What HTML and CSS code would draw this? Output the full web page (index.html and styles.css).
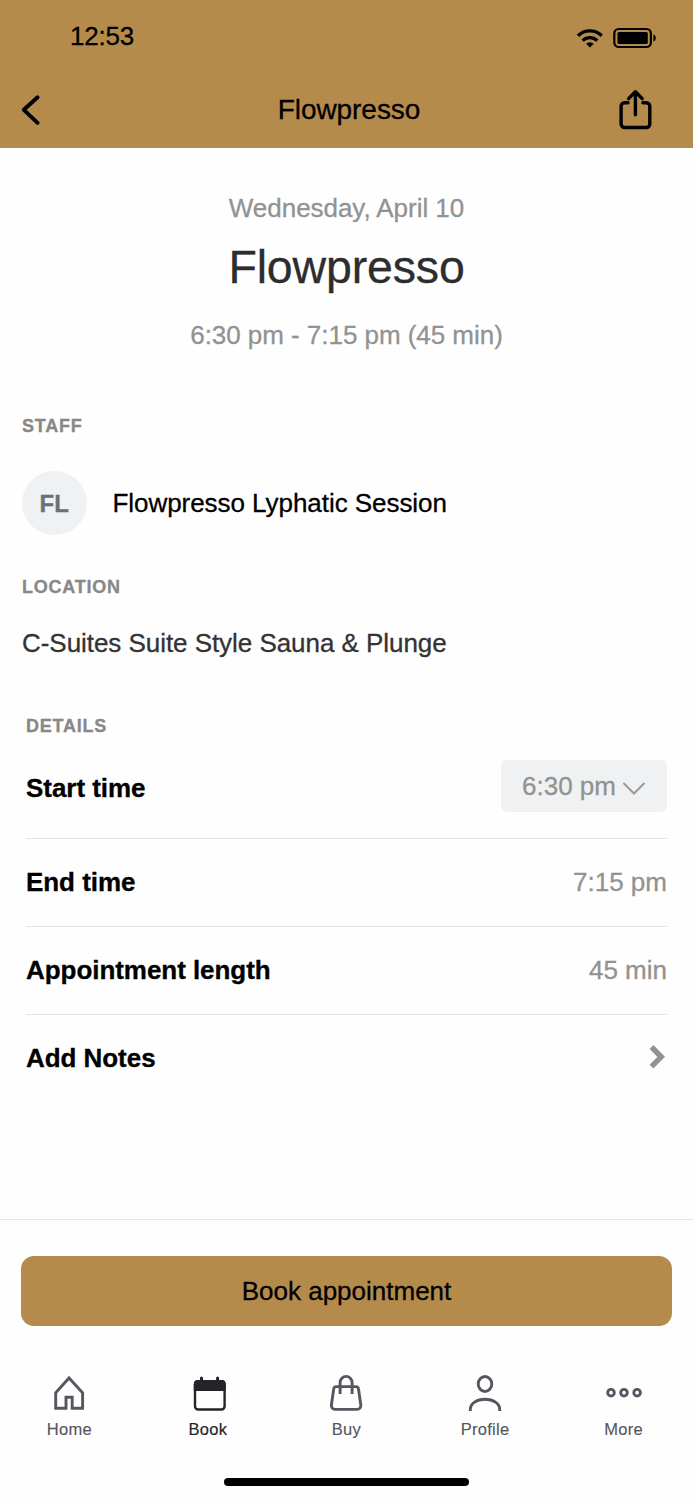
FILE: index.html
```html
<!DOCTYPE html>
<html lang="en">
<head>
<meta charset="utf-8">
<title>Flowpresso</title>
<link rel="stylesheet" href="styles.css">
</head>
<body>
<div class="screen">
  <header class="header">
    <div class="status">
      <span class="clock">12:53</span>
      <svg class="status-icons" viewBox="575 26 83 24" fill="none" stroke="#000">
        <path d="M578 35.8a17 17 0 0 1 23.800 0M582.600 40.600a10.400 10.400 0 0 1 14.600 0" stroke-width="3.300"/>
        <path d="M589.9 47.500l-3.800-3.800a5.400 5.400 0 0 1 7.600 0z" fill="#000" stroke="none"/>
        <rect x="614.3" y="29" width="36.6" height="18" rx="4.500" stroke-width="2.200"/>
        <rect x="617.5" y="32" width="30.3" height="12" rx="1.500" fill="#000" stroke="none"/>
        <path d="M653.4 34.3c3.2 1.5 3.2 6 0 7.5z" fill="#000" stroke="none"/>
      </svg>
    </div>
    <nav class="nav">
      <svg class="back" viewBox="20 92 24 36"><path d="M37.600 97.200L23.800 109.800l13.800 13"/></svg>
      <h1 class="nav-title">Flowpresso</h1>
      <svg class="share" viewBox="617 88 36 44"><path d="M628 102.8h-3.4a3.5 3.5 0 0 0-3.5 3.5v17.7a3.5 3.5 0 0 0 3.5 3.5h21.7a3.5 3.5 0 0 0 3.5-3.5v-17.7a3.5 3.5 0 0 0-3.5-3.5h-3.4M635.4 114.8V92.6M628.6 98.6l6.8-6.8 6.8 6.8"/></svg>
    </nav>
  </header>

  <main class="content">
    <section class="summary">
      <p class="date">Wednesday, April 10</p>
      <h2 class="title">Flowpresso</h2>
      <p class="time">6:30 pm - 7:15 pm (45 min)</p>
    </section>

    <section class="staff">
      <h3 class="label">STAFF</h3>
      <div class="person"><span class="avatar">FL</span><span class="name">Flowpresso Lyphatic Session</span></div>
    </section>

    <section class="location">
      <h3 class="label">LOCATION</h3>
      <p class="place">C-Suites Suite Style Sauna &amp; Plunge</p>
    </section>

    <section class="details">
      <h3 class="label">DETAILS</h3>
      <div class="row row-start"><b>Start time</b>
        <span class="select">6:30 pm<svg class="caret" viewBox="0 0 24 14"><path d="M2 2.500L12 12.500 22 2.500"/></svg></span>
      </div>
      <div class="row"><b>End time</b><span class="value">7:15 pm</span></div>
      <div class="row"><b>Appointment length</b><span class="value">45 min</span></div>
      <div class="row row-last"><b>Add Notes</b><svg class="chevron" viewBox="0 0 18 26"><path d="M2.500 3l9.700 9.800L2.500 22.600"/></svg></div>
    </section>
  </main>

  <footer class="footer">
    <button class="book">Book appointment</button>
    <nav class="tabs">
      <a class="tab"><svg viewBox="49.300 1373 40 40"><path d="M69.300 1378L56 1392.700v15.500h10.300v-11h6.200v11h10.400v-15.500z"/></svg>Home</a>
      <a class="tab active"><svg viewBox="187.900 1373 40 40"><rect x="194.900" y="1381.200" width="29.600" height="28.300" rx="3.200"/><path d="M193.700 1391v-7a4 4 0 0 1 4-4h24a4 4 0 0 1 4 4v7z" fill="#222428" stroke="none"/><path d="M201.400 1378v3M217.500 1378v3" stroke-width="3" stroke-linecap="round"/></svg>Book</a>
      <a class="tab"><svg viewBox="326.500 1373 40 40"><path d="M336.800 1386.600h19.600a2.600 2.600 0 0 1 2.600 2.300l2.300 16.200a3.700 3.700 0 0 1-3.700 4.300h-22a3.700 3.700 0 0 1-3.700-4.300l2.300-16.200a2.600 2.600 0 0 1 2.600-2.300zM340.600 1394v-11.600a6 6 0 0 1 12 0V1394"/></svg>Buy</a>
      <a class="tab"><svg viewBox="465.100 1373 40 40"><ellipse cx="485.100" cy="1384" rx="6.800" ry="7.500"/><path d="M470.400 1411v-1.500c0-6 6.300-10.200 14.700-10.200s14.700 4.200 14.700 10.200v1.500"/></svg>Profile</a>
      <a class="tab"><svg viewBox="603.700 1373 40 40"><circle cx="610.700" cy="1392.700" r="3.300"/><circle cx="623.700" cy="1392.700" r="3.300"/><circle cx="636.800" cy="1392.700" r="3.300"/></svg>More</a>
    </nav>
    <div class="home-indicator"></div>
  </footer>
</div>
</body>
</html>
```
FILE: styles.css
```css
* { box-sizing: border-box; margin: 0; padding: 0; }
body {
  background: #fefefe;
  color: #000;
  font: 26px/32px "Liberation Sans", Arial, sans-serif;
  -webkit-text-stroke: .3px currentColor;
}
.screen { width: 693px; height: 1500px; display: flex; flex-direction: column; }
svg { display: block; flex: none; }

.header { height: 148px; background: #b48b4b; flex: none; }
.status { height: 72px; padding: 4px 35px 0 70px; display: flex; align-items: center; justify-content: space-between; }
.clock { margin-top: -4px; letter-spacing: -.2px; }
.status-icons { width: 83px; height: 24px; }
.nav { height: 76px; padding: 0 40px 0 20px; display: grid; grid-template-columns: 56px 1fr 36px; align-items: center; }
.back { width: 24px; height: 36px; fill: none; stroke: #000; stroke-width: 3.9; stroke-linecap: round; stroke-linejoin: round; }
.nav-title { padding-left: 5px; font-size: 28px; font-weight: 400; text-align: center; letter-spacing: -.05px; }
.share { width: 36px; height: 44px; fill: none; stroke: #000; stroke-width: 3.4; stroke-linecap: round; stroke-linejoin: round; }

.content { flex: 1; }
.summary { padding-top: 44px; text-align: center; color: #929292; letter-spacing: -.04px; }
.title { margin: 16px 0 25px; color: #2d2d2d; font-size: 46.5px; line-height: 54px; font-weight: 400; letter-spacing: -.15px; }
.label { color: #888; font-size: 18px; line-height: 22px; letter-spacing: .75px; }
.staff { padding: 64px 22px 0; }
.person { margin-top: 34px; display: flex; align-items: center; gap: 26px; }
.avatar { width: 64.5px; height: 64px; padding-top: 1px; border-radius: 50%; background: #eff1f3; color: #6c6f77; font-size: 24px; font-weight: 700; display: flex; align-items: center; justify-content: center; }
.name { letter-spacing: -.05px; }
.location { padding: 41px 22px 0; }
.place { margin-top: 29px; color: #333; letter-spacing: -.05px; }
.details { padding: 56px 26px 0; }
.row { height: 88px; padding-bottom: 2px; border-bottom: 1px solid #e6e6e6; display: flex; align-items: center; justify-content: space-between; }
.row b { letter-spacing: -.05px; }
.row-start { height: 102px; padding-bottom: 0; }
.row-start b { margin-top: 1px; }
.row-last { border-bottom: 0; }
.value { color: #929292; }
.select { width: 166px; height: 52px; margin-bottom: 3px; padding: 0 21px 0 21px; border-radius: 7px; background: #eff1f3; color: #929292; display: flex; align-items: center; justify-content: space-between; }
.caret { width: 24px; height: 14px; margin-top: 4px; fill: none; stroke: #999; stroke-width: 2; stroke-linecap: round; }
.chevron { width: 18px; height: 26px; margin-bottom: 2px; fill: none; stroke: #929292; stroke-width: 5.4; }

.footer { height: 281px; padding-top: 36px; border-top: 1px solid #e6e6e6; flex: none; }
.book { display: block; width: 651px; height: 70px; margin: 0 auto; border: 0; border-radius: 13px; background: #b48b4b; color: #000; font: inherit; }
.tabs { margin-top: 47px; display: grid; grid-template-columns: repeat(5, 1fr); }
.tab { display: flex; flex-direction: column; align-items: center; gap: 6px; color: #54575f; font-size: 16.5px; line-height: 20px; letter-spacing: .3px; -webkit-text-stroke-width: .15px; }
.tab svg { width: 40px; height: 40px; fill: none; stroke: #54575f; stroke-width: 2.9; }
.tab.active { color: #222428; }
.tab.active svg { stroke: #222428; stroke-width: 2.4; }
.home-indicator { width: 245px; height: 8px; margin: 39px auto 0; border-radius: 4px; background: #000; }
```
